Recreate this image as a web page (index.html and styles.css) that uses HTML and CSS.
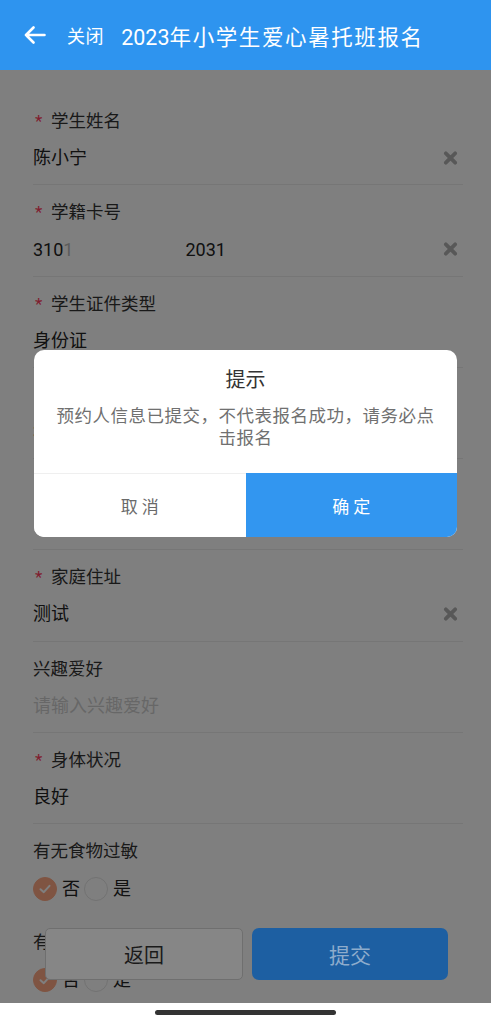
FILE: index.html
```html
<!DOCTYPE html>
<html lang="zh-CN">
<head>
<meta charset="utf-8">
<meta name="viewport" content="width=device-width, initial-scale=1">
<title>2023年小学生爱心暑托班报名</title>
<link rel="stylesheet" href="styles.css">
</head>
<body>
<div class="app">
  <header class="nav">
    <svg class="nav-back" viewBox="0 0 22 18" width="22" height="18" aria-hidden="true">
      <path d="M20.5 9H2M9.5 1.5L2 9L9.5 16.5" fill="none" stroke="#fff" stroke-width="2.6" stroke-linecap="round" stroke-linejoin="round"/>
    </svg>
    <span class="nav-close">关闭</span>
    <h1 class="nav-title"><span class="num">2023</span>年小学生爱心暑托班报名</h1>
  </header>

  <main class="form">
    <div class="field">
      <div class="field-label"><span class="req">*</span>学生姓名</div>
      <div class="field-value"><span class="val">陈小宁</span>
        <svg class="clear" viewBox="0 0 16 15" aria-hidden="true"><path d="M3 2.5L13 12.5M13 2.5L3 12.5" stroke="currentColor" stroke-width="4" stroke-linecap="round"/></svg>
      </div>
    </div>
    <div class="field">
      <div class="field-label"><span class="req">*</span>学籍卡号</div>
      <div class="field-value"><span class="val">310<span class="fade">1</span><span class="masked"></span>2031</span>
        <svg class="clear" viewBox="0 0 16 15" aria-hidden="true"><path d="M3 2.5L13 12.5M13 2.5L3 12.5" stroke="currentColor" stroke-width="4" stroke-linecap="round"/></svg>
      </div>
    </div>
    <div class="field">
      <div class="field-label"><span class="req">*</span>学生证件类型</div>
      <div class="field-value"><span class="val">身份证</span></div>
    </div>
    <div class="field">
      <div class="field-label"><span class="req">*</span>学生证件号码</div>
      <div class="field-value"><span class="val">310101********2031</span></div>
    </div>
    <div class="field">
      <div class="field-label"><span class="req">*</span>联系电话</div>
      <div class="field-value"><span class="val">138****5678</span></div>
    </div>
    <div class="field">
      <div class="field-label"><span class="req">*</span>家庭住址</div>
      <div class="field-value"><span class="val">测试</span>
        <svg class="clear" viewBox="0 0 16 15" aria-hidden="true"><path d="M3 2.5L13 12.5M13 2.5L3 12.5" stroke="currentColor" stroke-width="4" stroke-linecap="round"/></svg>
      </div>
    </div>
    <div class="field">
      <div class="field-label">兴趣爱好</div>
      <div class="field-value"><span class="val placeholder">请输入兴趣爱好</span></div>
    </div>
    <div class="field">
      <div class="field-label"><span class="req">*</span>身体状况</div>
      <div class="field-value"><span class="val">良好</span></div>
    </div>
    <div class="field field-plain">
      <div class="field-label">有无食物过敏</div>
      <div class="radio-group">
        <span class="radio"><span class="radio-icon checked"><svg viewBox="0 0 14 14" width="14" height="14" aria-hidden="true"><path d="M2.5 7.2L5.8 10.2L11.5 3.8" fill="none" stroke="#fff" stroke-width="2" stroke-linecap="round" stroke-linejoin="round"/></svg></span>否</span>
        <span class="radio"><span class="radio-icon"></span>是</span>
      </div>
    </div>
    <div class="field field-plain">
      <div class="field-label">有无药物过敏</div>
      <div class="radio-group">
        <span class="radio"><span class="radio-icon checked"><svg viewBox="0 0 14 14" width="14" height="14" aria-hidden="true"><path d="M2.5 7.2L5.8 10.2L11.5 3.8" fill="none" stroke="#fff" stroke-width="2" stroke-linecap="round" stroke-linejoin="round"/></svg></span>否</span>
        <span class="radio"><span class="radio-icon"></span>是</span>
      </div>
    </div>
  </main>

  <div class="mask"></div>

  <div class="footer">
    <button class="btn btn-back" type="button">返回</button>
    <button class="btn btn-submit" type="button">提交</button>
  </div>

  <div class="dialog" role="dialog">
    <div class="dialog-title">提示</div>
    <div class="dialog-msg">预约人信息已提交，不代表报名成功，请务必点击报名</div>
    <div class="dialog-actions">
      <button class="dialog-btn cancel" type="button">取 消</button>
      <button class="dialog-btn confirm" type="button">确 定</button>
    </div>
  </div>

  <div class="home-bar"><span class="home-indicator"></span></div>
</div>
</body>
</html>
```

FILE: styles.css
```css
html, body {
  margin: 0;
  padding: 0;
}

body {
  font-family: Roboto, "Noto Sans CJK SC", sans-serif;
  background: #fff;
  color: #333;
}

.app {
  position: relative;
  height: 100vh;
  overflow: hidden;
}

/* ---------- header ---------- */
.nav {
  height: 70px;
  box-sizing: border-box;
  background: #2e94ef;
  color: #fff;
  display: flex;
  align-items: center;
  padding-left: 24px;
}

.nav-back {
  flex: none;
  margin-right: 21px;
}

.nav-close {
  font-size: 18px;
  letter-spacing: 0.6px;
  margin-right: 17px;
}

.nav-title {
  margin: 0;
  font-size: 21.5px;
  font-weight: 400;
  letter-spacing: 1.6px;
  white-space: nowrap;
}

.nav-title .num {
  letter-spacing: 0;
}

/* ---------- form ---------- */
.form {
  padding: 24px 28px 0 33px;
}

.field {
  padding: 14px 0 13.25px;
  border-bottom: 1px solid #ececec;
}

.field-plain {
  border-bottom: none;
  padding-bottom: 13.25px;
}

.field-label {
  font-size: 17.5px;
  line-height: 26px;
  color: #333;
  white-space: nowrap;
}

.req {
  display: inline-block;
  width: 16px;
  padding-left: 2px;
  color: #ff3b5c;
  font-size: 17px;
}

.field-value {
  margin-top: 11px;
  height: 26px;
  display: flex;
  align-items: center;
  justify-content: space-between;
  font-size: 18px;
  color: #222;
}

.val {
  line-height: 26px;
  white-space: nowrap;
}

.placeholder {
  color: #cfcfcf;
}

.fade {
  color: #b8b8b8;
}

.masked {
  display: inline-block;
  width: 112px;
  height: 20px;
}

.clear {
  width: 15px;
  height: 14px;
  margin-right: 5px;
  color: #b0b0b0;
  flex: none;
}

.radio-group {
  margin-top: 12px;
  height: 26px;
  display: flex;
  align-items: center;
}

.radio {
  display: flex;
  align-items: center;
  gap: 5px;
  margin-right: 4px;
  font-size: 18px;
  line-height: 26px;
  color: #222;
}

.radio-icon {
  width: 24px;
  height: 24px;
  box-sizing: border-box;
  border-radius: 50%;
  border: 1px solid #e4e4e4;
  background: #fff;
  display: flex;
  align-items: center;
  justify-content: center;
}

.radio-icon.checked {
  background: #ffa884;
  border-color: #ffa884;
}

/* ---------- overlay ---------- */
.mask {
  position: absolute;
  top: 70px;
  bottom: 21px;
  left: 0;
  right: 0;
  background: rgba(0, 0, 0, 0.5);
  z-index: 10;
}

.footer {
  position: absolute;
  left: 0;
  right: 0;
  bottom: 44px;
  display: flex;
  gap: 9px;
  padding: 0 43px 0 45px;
  z-index: 20;
}

.btn {
  flex: 1;
  height: 52px;
  font-family: inherit;
  font-size: 20px;
  cursor: pointer;
}

.btn-back {
  background: #868686;
  border: 1px solid #6f6f6f;
  border-radius: 5px;
  color: #1a1a1a;
}

.btn-submit {
  background: #1d5fa2;
  border: none;
  border-radius: 7px;
  color: #8eaccc;
  font-size: 21px;
}

/* ---------- dialog ---------- */
.dialog {
  position: absolute;
  top: 350px;
  left: 34px;
  right: 34px;
  background: #fff;
  border-radius: 10px;
  overflow: hidden;
  text-align: center;
  z-index: 30;
}

.dialog-title {
  padding-top: 16px;
  font-size: 20px;
  line-height: 28px;
  color: #333;
}

.dialog-msg {
  margin-top: 11px;
  padding: 0 18px 24px;
  font-size: 17.5px;
  letter-spacing: 0.5px;
  line-height: 22px;
  color: #707070;
}

.dialog-actions {
  display: flex;
  height: 64px;
}

.dialog-btn {
  flex: 1;
  border: none;
  background: #fff;
  font-family: inherit;
  font-size: 17px;
  color: #6a6a6a;
  cursor: pointer;
}

.dialog-btn.cancel {
  border-top: 1px solid #efefef;
}

.dialog-btn.confirm {
  background: #3296f0;
  color: #fff;
}

/* ---------- system bar ---------- */
.home-bar {
  position: absolute;
  left: 0;
  right: 0;
  bottom: 0;
  height: 21px;
  background: #fff;
  z-index: 40;
}

.home-indicator {
  display: block;
  width: 181px;
  height: 5px;
  margin: 7px auto 0;
  border-radius: 3px;
  background: #333;
}
```
